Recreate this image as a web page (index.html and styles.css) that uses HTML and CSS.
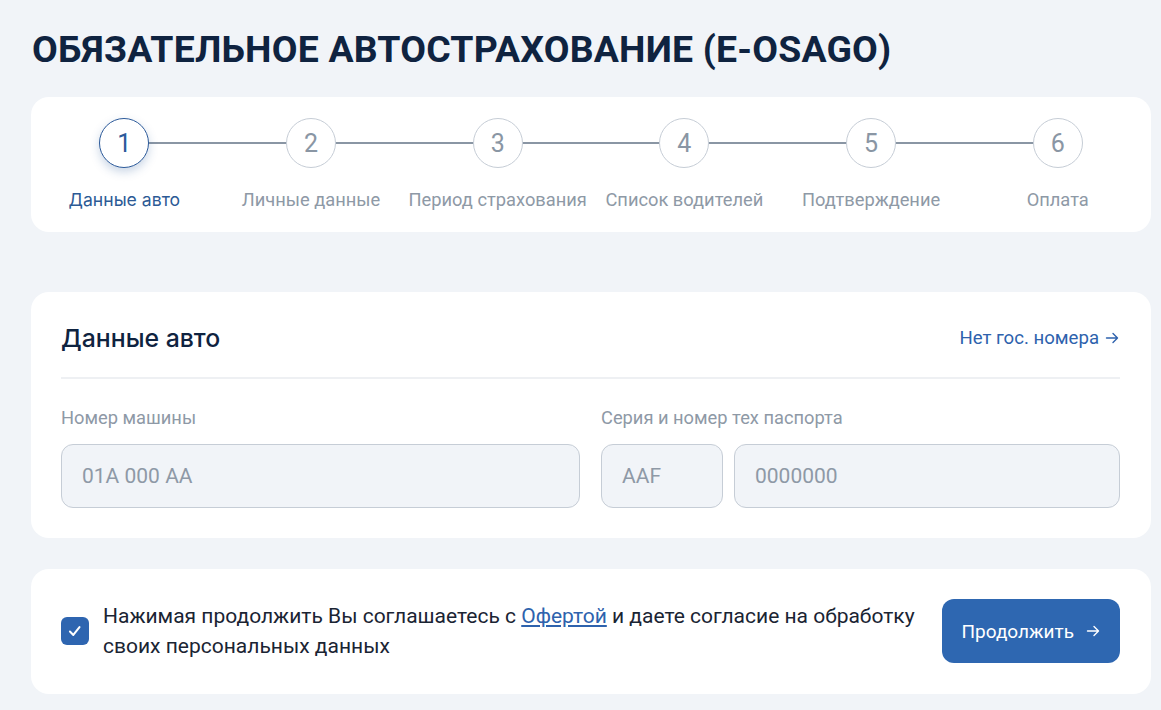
FILE: index.html
```html
<!DOCTYPE html>
<html lang="ru">

<head>
    <meta charset="UTF-8">
    <meta name="viewport" content="width=device-width, initial-scale=1.0">
    <title>E-OSAGO</title>
    <link rel="stylesheet" href="styles.css">
</head>

<body>
    <div class="page">
        <h1 class="page-title">ОБЯЗАТЕЛЬНОЕ АВТОСТРАХОВАНИЕ (E-OSAGO)</h1>

        <!-- Stepper -->
        <div class="card stepper">
            <ul class="steps">
                <li class="step active"><span class="step-num">1</span><span class="step-label">Данные авто</span></li>
                <li class="step"><span class="step-num">2</span><span class="step-label">Личные данные</span></li>
                <li class="step"><span class="step-num">3</span><span class="step-label">Период страхования</span></li>
                <li class="step"><span class="step-num">4</span><span class="step-label">Список водителей</span></li>
                <li class="step"><span class="step-num">5</span><span class="step-label">Подтверждение</span></li>
                <li class="step"><span class="step-num">6</span><span class="step-label">Оплата</span></li>
            </ul>
        </div>

        <!-- Car data -->
        <div class="card form-card">
            <div class="card-head">
                <h2>Данные авто</h2>
                <a href="#" class="link-arrow">Нет гос. номера
                    <svg width="16" height="16" viewBox="0 0 16 16" fill="none" stroke="currentColor" stroke-width="1.4" stroke-linecap="round" stroke-linejoin="round"><path d="M2.5 8h11M9 3.5L13.5 8 9 12.5"/></svg>
                </a>
            </div>
            <div class="fields">
                <div class="field">
                    <label for="car-number">Номер машины</label>
                    <input type="text" id="car-number" placeholder="01A 000 AA">
                </div>
                <div class="field">
                    <label for="pass-series">Серия и номер тех паспорта</label>
                    <div class="field-pair">
                        <input type="text" id="pass-series" class="short" placeholder="AAF">
                        <input type="text" id="pass-number" placeholder="0000000">
                    </div>
                </div>
            </div>
        </div>

        <!-- Agreement -->
        <div class="card agree-card">
            <label class="agree">
                <span class="checkbox">
                    <svg width="18" height="18" viewBox="0 0 16 16" fill="none" stroke="#fff" stroke-width="1.8" stroke-linecap="round" stroke-linejoin="round"><path d="M3.5 8.5l3 3 5.5-7"/></svg>
                </span>
                <span class="agree-text">Нажимая продолжить Вы соглашаетесь с <a href="#">Офертой</a> и даете согласие на обработку своих персональных данных</span>
            </label>
            <button class="btn-primary">Продолжить
                <svg width="16" height="16" viewBox="0 0 16 16" fill="none" stroke="currentColor" stroke-width="1.4" stroke-linecap="round" stroke-linejoin="round"><path d="M2.5 8h11M9 3.5L13.5 8 9 12.5"/></svg>
            </button>
        </div>
    </div>
</body>

</html>
```

FILE: styles.css
```css
body {
    margin: 0;
    padding: 0;
    background-color: #f1f4f8;
    font-family: Roboto, "Liberation Sans", sans-serif;
    color: #1a2433;
}

.page {
    padding: 25px 10px 40px 31px;
}

.page-title {
    margin: 0 0 23px 1px;
    font-size: 37.4px;
    font-weight: 700;
    line-height: 49px;
    color: #0f2340;
    letter-spacing: 0.2px;
}

.card {
    background-color: #fff;
    border-radius: 18px;
}

/* Stepper */
.stepper {
    padding: 21px 0 22px;
}

.steps {
    display: flex;
    list-style: none;
    margin: 0;
    padding: 0;
}

.step {
    flex: 1;
    display: flex;
    flex-direction: column;
    align-items: center;
    position: relative;
}

.step + .step::before {
    content: "";
    position: absolute;
    top: 24px;
    right: 50%;
    width: 100%;
    height: 2px;
    background-color: #8a96a4;
}

.step-num {
    position: relative;
    z-index: 1;
    width: 48px;
    height: 48px;
    border: 1px solid #c6cdd6;
    border-radius: 50%;
    background-color: #fff;
    display: flex;
    align-items: center;
    justify-content: center;
    font-size: 25px;
    color: #8a96a4;
}

.step-label {
    margin-top: 21px;
    font-size: 18.3px;
    color: #8e99a6;
    white-space: nowrap;
}

.step.active .step-num {
    border-color: #2c5a9a;
    color: #2c5a9a;
    box-shadow: 0 4px 10px rgba(44, 90, 154, 0.25);
}

.step.active .step-label {
    font-family: Inter, Roboto, sans-serif;
    color: #2c5a95;
    font-size: 17.6px;
}

/* Form card */
.form-card {
    margin-top: 60px;
    padding: 24px 31px 30px 30px;
}

.card-head {
    display: flex;
    justify-content: space-between;
    align-items: center;
    padding-bottom: 17px;
    border-bottom: 2px solid #eef0f3;
}

.card-head h2 {
    margin: 0;
    font-family: Inter, Roboto, sans-serif;
    font-size: 24.8px;
    font-weight: 500;
    color: #0f2340;
    line-height: 44px;
}

.link-arrow {
    display: flex;
    align-items: center;
    gap: 5px;
    font-size: 18.6px;
    color: #2e62ad;
    text-decoration: none;
}

.fields {
    display: grid;
    grid-template-columns: 1fr 1fr;
    gap: 21px;
    margin-top: 28px;
}

.field {
    display: flex;
    flex-direction: column;
}

.field label {
    font-size: 18.3px;
    color: #8e99a6;
    margin-bottom: 16px;
}

.field-pair {
    display: flex;
    gap: 11px;
}

.field input {
    box-sizing: border-box;
    width: 100%;
    height: 64px;
    padding: 0 20px;
    border: 1px solid #c6cdd6;
    border-radius: 12px;
    background-color: #f1f4f8;
    font-family: Roboto, sans-serif;
    font-size: 21px;
    color: #1a2433;
    outline: none;
}

.field input::placeholder {
    color: #8e99a6;
}

.field-pair input.short {
    flex: 0 0 122px;
    width: 122px;
}

/* Agreement card */
.agree-card {
    margin-top: 31px;
    padding: 30px 31px 31px 30px;
    display: flex;
    align-items: center;
    justify-content: space-between;
    gap: 24px;
}

.agree {
    display: flex;
    align-items: center;
    gap: 14px;
    cursor: pointer;
}

.checkbox {
    flex: 0 0 28px;
    width: 28px;
    height: 28px;
    border-radius: 6px;
    background-color: #2e65b0;
    display: flex;
    align-items: center;
    justify-content: center;
}

.agree-text {
    font-size: 21px;
    line-height: 30px;
    color: #1a2433;
    max-width: 830px;
}

.agree-text a {
    color: #2e62ad;
}

.btn-primary {
    flex: 0 0 auto;
    height: 64px;
    padding: 0 19px;
    border: none;
    border-radius: 12px;
    background-color: #2e67b1;
    color: #fff;
    font-family: Roboto, sans-serif;
    font-size: 19px;
    display: flex;
    align-items: center;
    gap: 11px;
    cursor: pointer;
}
```
